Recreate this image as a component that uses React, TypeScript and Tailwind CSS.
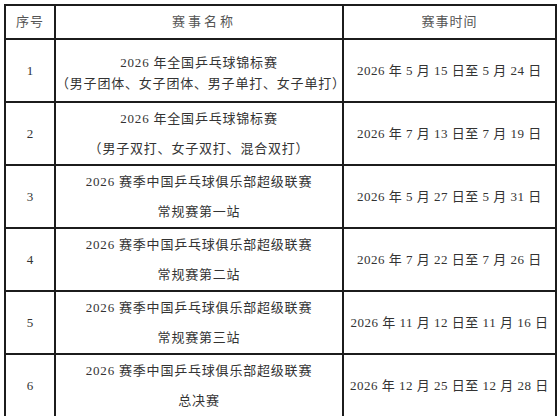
const rows = [
  {
    no: "1",
    name: ["2026 年全国乒乓球锦标赛", "（男子团体、女子团体、男子单打、女子单打）"],
    time: "2026 年 5 月 15 日至 5 月 24 日",
    tight: true,
  },
  {
    no: "2",
    name: ["2026 年全国乒乓球锦标赛", "（男子双打、女子双打、混合双打）"],
    time: "2026 年 7 月 13 日至 7 月 19 日",
  },
  {
    no: "3",
    name: ["2026 赛季中国乒乓球俱乐部超级联赛", "常规赛第一站"],
    time: "2026 年 5 月 27 日至 5 月 31 日",
  },
  {
    no: "4",
    name: ["2026 赛季中国乒乓球俱乐部超级联赛", "常规赛第二站"],
    time: "2026 年 7 月 22 日至 7 月 26 日",
  },
  {
    no: "5",
    name: ["2026 赛季中国乒乓球俱乐部超级联赛", "常规赛第三站"],
    time: "2026 年 11 月 12 日至 11 月 16 日",
  },
  {
    no: "6",
    name: ["2026 赛季中国乒乓球俱乐部超级联赛", "总决赛"],
    time: "2026 年 12 月 25 日至 12 月 28 日",
  },
];

const App = () => {
  return (
    <div className="w-[559px] h-[416px] overflow-hidden bg-white pl-[4px] pt-[4px] font-['Liberation_Serif','Noto_Sans_CJK_SC',serif] text-[13px] text-[#333]">
      <table className="w-[551px] table-fixed border-collapse">
        <colgroup>
          <col className="w-[50px]" />
          <col className="w-[288px]" />
          <col className="w-[213px]" />
        </colgroup>
        <thead>
          {/* Header */}
          <tr className="h-[34px] text-[#555]">
            <th className="border-2 border-[#1c1c1c] p-0 font-normal tracking-[1px]">序号</th>
            <th className="border-2 border-[#1c1c1c] p-0 pl-[10px] font-normal tracking-[3px]">赛事名称</th>
            <th className="border-2 border-[#1c1c1c] p-0 font-normal tracking-[1px]">赛事时间</th>
          </tr>
        </thead>
        <tbody>
          {rows.map((r) => (
            <tr key={r.no} className="h-[63px]">
              <td className="border-2 border-[#1c1c1c] p-0 text-center">{r.no}</td>
              <td className="border-2 border-[#1c1c1c] p-0 text-center whitespace-nowrap tracking-[0.8px]">
                <div className={r.tight ? "pt-[5px] leading-[21px]" : "leading-[30px]"}>
                  <p>{r.name[0]}</p>
                  <p>{r.name[1]}</p>
                </div>
              </td>
              <td className="border-2 border-[#1c1c1c] p-0 text-center whitespace-nowrap tracking-[0.5px]">{r.time}</td>
            </tr>
          ))}
        </tbody>
      </table>
    </div>
  );
};

export default App;
